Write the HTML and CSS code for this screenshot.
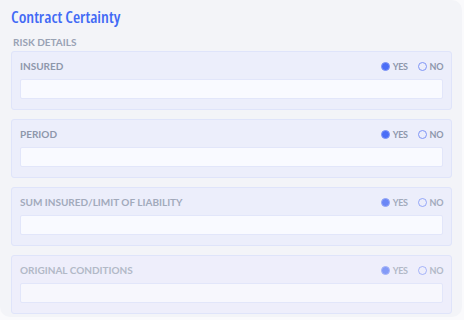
FILE: index.html
```html
<!DOCTYPE html>
<html>
<head>
<meta charset="utf-8">
<link rel="stylesheet" href="styles.css">
</head>
<body>
<div class="card">
  <h1 class="title">Contract Certainty</h1>
  <div class="subtitle">RISK DETAILS</div>
  <div class="list">
    <div class="section">
      <div class="row">
        <span class="label">INSURED</span>
        <span class="radios"><span class="radio on"></span><span class="opt">YES</span><span class="radio"></span><span class="opt">NO</span></span>
      </div>
      <div class="input"></div>
    </div>
    <div class="section">
      <div class="row">
        <span class="label">PERIOD</span>
        <span class="radios"><span class="radio on"></span><span class="opt">YES</span><span class="radio"></span><span class="opt">NO</span></span>
      </div>
      <div class="input"></div>
    </div>
    <div class="section fade1">
      <div class="row">
        <span class="label">SUM INSURED/LIMIT OF LIABILITY</span>
        <span class="radios"><span class="radio on"></span><span class="opt">YES</span><span class="radio"></span><span class="opt">NO</span></span>
      </div>
      <div class="input"></div>
    </div>
    <div class="section fade2">
      <div class="row">
        <span class="label">ORIGINAL CONDITIONS</span>
        <span class="radios"><span class="radio on"></span><span class="opt">YES</span><span class="radio"></span><span class="opt">NO</span></span>
      </div>
      <div class="input"></div>
    </div>
  </div>
</div>
</body>
</html>
```
FILE: styles.css
```css
html, body {
  margin: 0;
  padding: 0;
  background: #fafafc;
  font-family: Lato, "Noto Sans", sans-serif;
}
.card {
  width: 462px;
  height: 317px;
  box-sizing: border-box;
  background: #f3f4f8;
  border-radius: 0 10px 10px 10px;
  padding: 6px 10px 0 11px;
  overflow: hidden;
}
.title {
  margin: 0;
  font-family: "Open Sans", Lato, sans-serif;
  font-size: 16.5px;
  line-height: 22px;
  font-weight: 600;
  font-stretch: 81%;
  color: #4169f5;
}
.subtitle {
  margin: 8px 0 0 2px;
  font-size: 10px;
  line-height: 12px;
  font-weight: 700;
  color: #99a2b4;
}
.list {
  margin-top: 3px;
  display: flex;
  flex-direction: column;
  gap: 9px;
}
.section {
  height: 59px;
  box-sizing: border-box;
  background: #eceefb;
  border: 1px solid #dfe4fa;
  border-radius: 3px;
  padding: 8px 8px 10px 8px;
}
.row {
  height: 12px;
  display: flex;
  align-items: center;
  justify-content: space-between;
}
.label {
  font-size: 10px;
  font-weight: 700;
  color: #8e97ab;
  line-height: 12px;
}
.radios {
  display: flex;
  align-items: center;
}
.radio {
  width: 9px;
  height: 9px;
  box-sizing: border-box;
  border-radius: 50%;
  border: 1.3px solid #7f95f6;
  margin-right: 3px;
}
.radio.on {
  background: #4b6ef6;
  border-color: #7f95f6;
}
.opt {
  font-size: 9px;
  font-weight: 700;
  letter-spacing: -0.4px;
  color: #8e97ab;
  margin-right: 10px;
}
.opt:last-child {
  margin-right: 0;
}
.input {
  margin-top: 7px;
  height: 20px;
  box-sizing: border-box;
  background: #f9faff;
  border: 1px solid #e2e6fa;
  border-radius: 2px;
}
.fade1 .label, .fade1 .opt { color: #a2aabb; }
.fade1 .radio { opacity: 0.8; }
.fade2 { background: #eeeefb; }
.fade2 .label, .fade2 .opt { color: #b2b9c7; }
.fade2 .radio { opacity: 0.65; }
.fade2 .input { background: #f7f7fd; }
```
